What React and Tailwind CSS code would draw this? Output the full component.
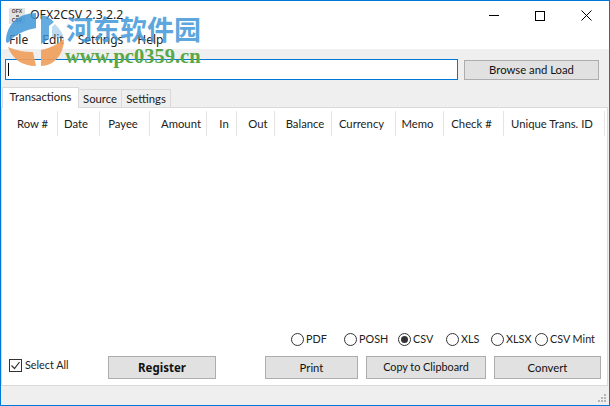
const columns = [
  ['Row #', 'w-[56px] pl-[6px]'],
  ['Date', 'w-[42px] pr-[5px]'],
  ['Payee', 'w-[50px] pr-[3px]'],
  ['Amount', 'w-[57px] pl-[6px]'],
  ['In', 'w-[30px] pl-[5px]'],
  ['Out', 'w-[38px] pl-[5px]'],
  ['Balance', 'w-[57px] pl-[4px]'],
  ['Currency', 'w-[64px] pr-[4px]'],
  ['Memo', 'w-[48px] pr-[4px]'],
  ['Check #', 'w-[60px] pr-[4px]'],
  ['Unique Trans. ID', 'w-[101px] pr-[4px]'],
];

const formats = [
  ['PDF', 'w-[53px]'],
  ['POSH', 'w-[54px]'],
  ['CSV', 'w-[48px]'],
  ['XLS', 'w-[45px]'],
  ['XLSX', 'w-[44px]'],
  ['CSV Mint', 'w-[60px]'],
];

function Btn({ children, className = '' }) {
  return (
    <button className={`h-[23px] bg-[#e1e1e1] border border-[#adadad] text-[#111] flex items-center justify-center ${className}`}>
      {children}
    </button>
  );
}

function Radio({ label, checked, className }) {
  return (
    <div className={`flex items-center gap-[2px] text-[10.8px] ${className}`}>
      <span className="w-[13px] h-[13px] rounded-full border border-[#333] bg-white flex items-center justify-center shrink-0">
        {checked && <span className="w-[7px] h-[7px] rounded-full bg-[#333]" />}
      </span>
      <span className="whitespace-nowrap">{label}</span>
    </div>
  );
}

function Watermark() {
  return (
    <div className="absolute left-[4px] top-[11px] w-[200px] h-[60px] pointer-events-none">
      <svg className="absolute left-0 top-0" width="62" height="56" viewBox="0 0 62 56">
        <path d="M1 30 C1 12 14 1 31 1 L31 16 C20 18 9 23 3 31Z" fill="#3f97d8" opacity="0.85" />
        <path d="M36 3 C43 4 46 7 49 10 L44 14 L44 27 L36 32Z" fill="#3f97d8" opacity="0.8" />
        <path d="M50 12 C55 17 58 22 59 27 L47 25 L47 15Z" fill="#3f97d8" opacity="0.35" />
        <path d="M3 35 C12 39 20 40 28 40 L31 54 C16 54 7 46 3 35Z" fill="#f0a05c" opacity="0.92" />
        <path d="M36 54 L36 38 C45 36 53 32 59 27 C59 42 49 54 36 54Z" fill="#f0a05c" opacity="0.92" />
      </svg>
      <div className="absolute left-[61px] top-[1px] text-[27px] leading-[32px] font-bold text-[#3f97d8]/85 whitespace-nowrap font-['Noto_Sans_CJK_SC',sans-serif]">河东软件园</div>
      <div className="absolute left-[60px] top-[34px] text-[20.5px] leading-[20px] font-bold text-[#59a845] whitespace-nowrap font-['Liberation_Serif',serif]">www.pc0359.cn</div>
    </div>
  );
}

export default function App() {
  return (
    <div className="relative w-[610px] h-[406px] overflow-hidden border border-[#0078d7] bg-[#efefef] flex flex-col text-[11.3px] text-[#222] font-['Lato',sans-serif] leading-none">
      {/* Title + menu */}
      <div className="bg-white h-[48px] shrink-0 flex flex-col">
        <div className="h-[29px] flex items-center pl-[8px]">
          <div className="w-[16px] h-[16px] bg-[#e2e2e2] text-[5px] leading-[5px] font-bold text-[#444] flex flex-col items-center justify-center font-['Liberation_Sans',sans-serif]">
            <span>OFX</span>
            <span className="w-[3px] h-[2px] my-[1px] bg-[#777]" />
            <span>CSV</span>
          </div>
          <span className="ml-[5px] text-[12.3px] font-['Noto_Sans',sans-serif]">OFX2CSV 2.3.2.2</span>
          <div className="ml-auto flex items-center">
            <div className="w-[46px] flex justify-center">
              <div className="w-[10px] h-px bg-black" />
            </div>
            <div className="w-[46px] flex justify-center">
              <div className="w-[10px] h-[10px] border border-black" />
            </div>
            <div className="w-[46px] flex justify-center">
              <svg width="11" height="11" viewBox="0 0 11 11" stroke="black" strokeWidth="1"><path d="M0.5 0.5 L10.5 10.5 M10.5 0.5 L0.5 10.5" /></svg>
            </div>
          </div>
        </div>
        <div className="flex items-center gap-[14px] pl-[8px] text-[12px] h-[19px] font-['Noto_Sans',sans-serif]">
          <span>File</span>
          <span>Edit</span>
          <span>Settings</span>
          <span>Help</span>
        </div>
      </div>

      {/* Path row */}
      <div className="flex items-center pl-[4px] pt-[10px] h-[31px] shrink-0">
        <div className="w-[453px] h-[21px] bg-white border border-[#0078d7] flex items-center pl-[2px]">
          <div className="w-px h-[13px] bg-black" />
        </div>
        <Btn className="ml-[6px] w-[135px] !h-[20px]">Browse and Load</Btn>
      </div>

      {/* Tabs */}
      <div className="flex items-end pl-[1px] h-[27px] shrink-0 relative z-10">
        <div className="h-[21px] w-[77px] bg-white border border-b-0 border-[#d9d9d9] flex items-center justify-center pb-[2px] mb-[-1px]">Transactions</div>
        <div className="h-[18px] w-[43px] bg-[#efefef] border border-b-0 border-l-0 border-[#d9d9d9] flex items-center justify-center">Source</div>
        <div className="h-[18px] w-[49px] bg-[#efefef] border border-b-0 border-l-0 border-[#d9d9d9] flex items-center justify-center">Settings</div>
      </div>

      {/* Panel */}
      <div className="flex-1 bg-white border border-[#d9d9d9] mr-[1px] flex flex-col min-h-0">
        <div className="flex h-[25px] mt-[3px] shrink-0">
          {columns.map(([name, w]) => (
            <div key={name} className={`${w} shrink-0 border-r border-[#e5e5e5] flex items-center justify-center whitespace-nowrap pt-[1px]`}>
              {name}
            </div>
          ))}
        </div>
        <div className="flex-1" />
        <div className="flex justify-end pr-[12px] mb-[10px]">
          {formats.map(([label, w]) => (
            <Radio key={label} label={label} checked={label === 'CSV'} className={w} />
          ))}
        </div>
        <div className="flex items-center pl-[7px] mb-[6px]">
          <div className="flex items-center gap-[3px] w-[99px] mt-[-4px] text-[10.8px]">
            <span className="w-[13px] h-[13px] border border-[#333] bg-white flex items-center justify-center">
              <svg width="11" height="11" viewBox="0 0 11 11" fill="none" stroke="#333" strokeWidth="1.2"><path d="M1.5 5.5 L4.5 8.5 L9.5 2" /></svg>
            </span>
            <span>Select All</span>
          </div>
          <Btn className="w-[108px] font-bold text-[11.5px] font-['Noto_Sans',sans-serif]">Register</Btn>
          <Btn className="ml-[49px] w-[93px]">Print</Btn>
          <Btn className="ml-[8px] w-[120px] text-[10.8px]">Copy to Clipboard</Btn>
          <Btn className="ml-[8px] w-[107px]">Convert</Btn>
        </div>
      </div>

      {/* Status bar */}
      <div className="h-[19px] shrink-0 flex justify-end items-end p-[2px]">
        <svg width="10" height="10" viewBox="0 0 10 10" fill="#b5b5b5">
          <rect x="7" y="1" width="2" height="2" />
          <rect x="4" y="4" width="2" height="2" />
          <rect x="7" y="4" width="2" height="2" />
          <rect x="1" y="7" width="2" height="2" />
          <rect x="4" y="7" width="2" height="2" />
          <rect x="7" y="7" width="2" height="2" />
        </svg>
      </div>

      <Watermark />
    </div>
  );
}
